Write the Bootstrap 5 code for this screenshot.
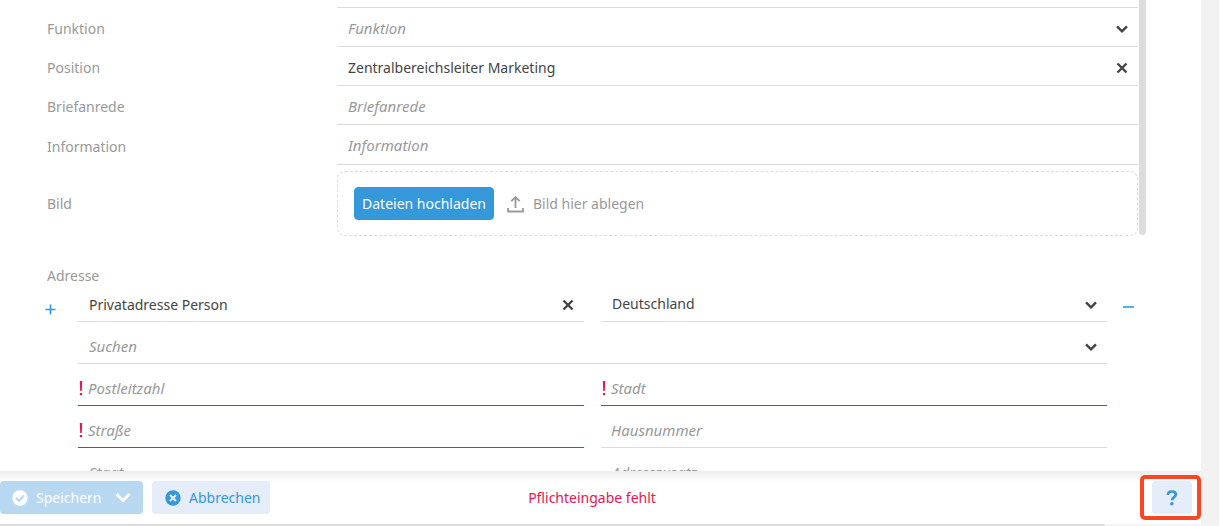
<!DOCTYPE html>
<html lang="de">
<head>
<meta charset="utf-8">
<meta name="viewport" content="width=device-width, initial-scale=1">
<title>Person bearbeiten</title>
<link href="https://cdn.jsdelivr.net/npm/bootstrap@5.3.0/dist/css/bootstrap.min.css" rel="stylesheet">
<style>
  body { font-family: "Noto Sans", sans-serif; font-size: 14px; line-height: 20px; color: #444; background: #fff; }
  .app-shell { height: 100vh; background: #f2f2f2; margin-right: 2px; padding-right: 18px; }
  .pane { background: #fff; }
  .pane-body { min-height: 0; padding-left: 47px; }

  /* person fields, with their scroll thumb at the right */
  .person-area { margin-right: 55px; }
  .person-thumb { width: 7px; height: 235px; margin-left: 1px; background: #dcdcdc; border-radius: 0 0 4px 4px; }
  .field-label { width: 290px; color: #999; flex-shrink: 0; padding-top: 3px; }
  .field-row { height: 39px; }
  .field-row.tall { height: 40px; }
  .row-end { height: 8px; }
  .line-field { border-bottom: 1px solid #dcdcdc; position: relative; min-width: 0; height: 100%; }
  .line-field input, .line-field select {
    width: 100%; height: 100%; border: 0; outline: 0; background: transparent; appearance: none;
    padding: 2px 40px 0 11px; color: #444; line-height: 20px;
  }
  .line-field input::placeholder { color: #999; font-style: italic; font-size: 15px; opacity: 1; }
  .line-field select.unset { color: #999; font-style: italic; font-size: 15px; }
  .field-icon { position: absolute; right: 9px; top: 50%; margin-top: 2px; transform: translateY(-50%); color: #444; line-height: 0; pointer-events: none; }
  button.field-icon { right: 10px; pointer-events: auto; padding: 0; border: 0; background: none; }
  .missing { border-bottom-color: #e9164f; }
  .bang { position: absolute; left: 1px; top: 50%; margin-top: 3px; transform: translateY(-50%); color: #e9164f; line-height: 0; }

  .drop-zone { margin-top: 6px; height: 65px; border: 1px dashed #dcdcdc; border-radius: 8px; padding: 0 16px; color: #999; }
  .drop-label { padding-top: 7px; }
  .btn-upload { --bs-btn-color: #fff; --bs-btn-bg: #3498db; --bs-btn-border-color: #3498db; --bs-btn-hover-bg: #2b87c4; --bs-btn-hover-color: #fff; --bs-btn-font-size: 14px; --bs-btn-border-radius: 4px; --bs-btn-padding-x: 7px; --bs-btn-padding-y: 0; height: 33px; line-height: 20px; }
  .upload-icon { margin-left: 13px; margin-right: 9px; }

  /* address block */
  .address-title { color: #999; margin-top: 30px; line-height: 20px; }
  .address-area { margin-right: 67px; margin-top: -6px; }
  .step-btn { width: 33px; margin-left: -2px; flex-shrink: 0; color: #3498db; padding: 0; border: 0; background: none; text-align: left; line-height: 0; height: 58px; }
  .step-btn.less { width: 27px; margin-left: 0; text-align: right; height: 54px; }
  .address-grid { display: grid; grid-template-columns: 1fr 1fr; column-gap: 17px; grid-auto-rows: 42px; }
  .address-grid .line-field input, .address-grid .line-field select { padding-top: 7px; }
  .address-grid .field-icon { margin-top: 4px; }
  .span-all { grid-column: 1 / -1; }
  .address-grid .line-field.required-field input { padding-left: 10px; }

  /* footer */
  .action-bar { height: 53px; background: linear-gradient(#ededed, #fff 11px); padding-right: 9px; }
  .bar-side { flex: 1 1 0; }
  .action-btn { --bs-btn-font-size: 14px; --bs-btn-border-radius: 4px; --bs-btn-border-width: 0; --bs-btn-padding-y: 0; height: 33px; line-height: 20px; }
  .action-btn svg { flex-shrink: 0; }
  .btn-save { --bs-btn-padding-x: 12px; --bs-btn-disabled-bg: #b8d8f1; --bs-btn-disabled-color: #fff; --bs-btn-disabled-opacity: 1; width: 143px; }
  .btn-soft { --bs-btn-bg: #e5edfb; --bs-btn-color: #3498db; --bs-btn-hover-bg: #d6e2f7; --bs-btn-hover-color: #2b87c4; --bs-btn-padding-x: 12px; }
  .btn-cancel { width: 118px; margin-left: 9px; --bs-btn-padding-x: 13px; white-space: nowrap; }
  .btn-help { width: 40px; --bs-btn-padding-x: 0; }
  .error-note { color: #e9164f; padding-right: 8px; }
  .help-frame { position: absolute; right: 0; top: 4px; width: 61px; height: 45px; border: 4px solid #f94624; border-radius: 5px; pointer-events: none; }
  .scroll-track { height: 2px; background: #f5f5f5; margin-right: -20px; }
  .scroll-thumb { width: calc(100% - 116px); height: 2px; background: #dcdcdc; border-radius: 0 2px 0 0; }
</style>
</head>
<body>
<svg width="0" height="0" class="position-absolute" aria-hidden="true">
  <symbol id="chevron" viewBox="0 0 14 9"><path d="M2 1.8 7 6.8 12 1.8" fill="none" stroke="currentColor" stroke-width="2.4"/></symbol>
  <symbol id="cross" viewBox="0 0 12 12"><path d="M1.5 1.5 10.5 10.5M10.5 1.5 1.5 10.5" fill="none" stroke="currentColor" stroke-width="2.4"/></symbol>
  <symbol id="bang" viewBox="0 0 4 16"><path d="M.8 1H3.200L2.800 11H1.200ZM.9 13H3.100V15.200H.9Z" fill="currentColor"/></symbol>
</svg>

<div class="app-shell overflow-hidden">
  <form class="pane d-flex flex-column h-100">
    <main class="pane-body flex-fill overflow-hidden">
      <div class="person-area d-flex align-items-start">
        <div class="flex-fill">
          <div class="d-flex row-end"><div class="field-label"></div><div class="line-field flex-fill"></div></div>
          <div class="d-flex align-items-center field-row">
            <label class="field-label" for="funktion">Funktion</label>
            <div class="line-field flex-fill">
              <select id="funktion" class="unset"><option>Funktion</option></select>
              <span class="field-icon"><svg width="14" height="9"><use href="#chevron"/></svg></span>
            </div>
          </div>
          <div class="d-flex align-items-center field-row">
            <label class="field-label" for="position">Position</label>
            <div class="line-field flex-fill">
              <input id="position" type="text" value="Zentralbereichsleiter Marketing">
              <button type="button" class="field-icon" aria-label="Position leeren"><svg width="12" height="12"><use href="#cross"/></svg></button>
            </div>
          </div>
          <div class="d-flex align-items-center field-row">
            <label class="field-label" for="anrede">Briefanrede</label>
            <div class="line-field flex-fill"><input id="anrede" type="text" placeholder="Briefanrede"></div>
          </div>
          <div class="d-flex align-items-center field-row tall">
            <label class="field-label" for="info">Information</label>
            <div class="line-field flex-fill"><input id="info" type="text" placeholder="Information"></div>
          </div>
          <div class="d-flex align-items-center">
            <div class="field-label drop-label">Bild</div>
            <div class="drop-zone flex-fill d-flex align-items-center">
              <button type="button" class="btn btn-upload">Dateien hochladen</button>
              <svg class="upload-icon" width="17" height="18" viewBox="0 0 17 18" fill="none" stroke="#999" stroke-width="1.8" aria-hidden="true"><path d="M8.500 13V2.500M4.300 6.200 8.500 2 12.700 6.200M1 13V16.500H16V13"/></svg>
              <span>Bild hier ablegen</span>
            </div>
          </div>
        </div>
        <div class="person-thumb"></div>
      </div>

      <div class="address-title">Adresse</div>
      <div class="address-area d-flex align-items-start">
        <button type="button" class="step-btn" aria-label="Adresse hinzufügen"><svg width="11" height="11" viewBox="0 0 11 11" stroke="#3498db" stroke-width="1.600"><path d="M5.500 .5V10.500M.5 5.500H10.500"/></svg></button>
        <div class="address-grid flex-fill">
          <div class="line-field">
            <input type="text" aria-label="Adressart" value="Privatadresse Person">
            <button type="button" class="field-icon" aria-label="Adressart leeren"><svg width="12" height="12"><use href="#cross"/></svg></button>
          </div>
          <div class="line-field">
            <select aria-label="Land"><option>Deutschland</option></select>
            <span class="field-icon"><svg width="14" height="9"><use href="#chevron"/></svg></span>
          </div>
          <div class="line-field span-all">
            <select class="unset" aria-label="Suchen"><option>Suchen</option></select>
            <span class="field-icon"><svg width="14" height="9"><use href="#chevron"/></svg></span>
          </div>
          <div class="line-field required-field missing"><span class="bang"><svg width="4" height="16"><use href="#bang"/></svg></span><input type="text" aria-label="Postleitzahl" placeholder="Postleitzahl"></div>
          <div class="line-field required-field missing"><span class="bang"><svg width="4" height="16"><use href="#bang"/></svg></span><input type="text" aria-label="Stadt" placeholder="Stadt"></div>
          <div class="line-field required-field missing"><span class="bang"><svg width="4" height="16"><use href="#bang"/></svg></span><input type="text" aria-label="Straße" placeholder="Straße"></div>
          <div class="line-field required-field"><input type="text" aria-label="Hausnummer" placeholder="Hausnummer"></div>
          <div class="line-field"><input type="text" aria-label="Staat" placeholder="Staat"></div>
          <div class="line-field"><input type="text" aria-label="Adresszusatz" placeholder="Adresszusatz"></div>
        </div>
        <button type="button" class="step-btn less" aria-label="Adresse entfernen"><svg width="11" height="2"><rect width="11" height="2" fill="#3498db" opacity=".8"/></svg></button>
      </div>
    </main>

    <footer class="action-bar position-relative d-flex align-items-center flex-shrink-0">
      <div class="bar-side d-flex">
        <button type="submit" class="btn action-btn btn-save d-flex align-items-center" disabled>
          <svg width="16" height="16" viewBox="0 0 16 16" aria-hidden="true"><circle cx="8" cy="8" r="7.700" fill="#fff"/><path d="M4 8 7 11 12 5.500" fill="none" stroke="#b8d8f1" stroke-width="2"/></svg>
          <span class="ms-2">Speichern</span>
          <svg class="ms-auto" width="16" height="11" viewBox="0 0 16 11" aria-hidden="true"><path d="M1.500 2 8 8.500 14.500 2" fill="none" stroke="#fff" stroke-width="3"/></svg>
        </button>
        <button type="button" class="btn action-btn btn-soft btn-cancel d-flex align-items-center">
          <svg width="16" height="16" viewBox="0 0 16 16" aria-hidden="true"><circle cx="8" cy="8" r="7.700" fill="#3498db"/><path d="M5 5 11 11M11 5 5 11" stroke="#e5edfb" stroke-width="2.200"/></svg>
          <span class="ms-2">Abbrechen</span>
        </button>
      </div>
      <div class="error-note" role="alert">Pflichteingabe fehlt</div>
      <div class="bar-side d-flex justify-content-end">
        <button type="button" class="btn action-btn btn-soft btn-help d-flex align-items-center justify-content-center" aria-label="Hilfe">
          <svg width="12" height="16" viewBox="0 0 12 16" aria-hidden="true"><path d="M1.800 4.900C1.900 2.700 3.500 1.500 5.800 1.500S9.900 2.700 9.900 4.600C9.900 7.200 6 7 6 10.300" fill="none" stroke="#3498db" stroke-width="2.700"/><circle cx="5.900" cy="13.800" r="1.800" fill="#3498db"/></svg>
        </button>
      </div>
      <div class="help-frame"></div>
    </footer>
    <div class="scroll-track flex-shrink-0"><div class="scroll-thumb"></div></div>
  </form>
</div>
<script src="https://cdn.jsdelivr.net/npm/bootstrap@5.3.0/dist/js/bootstrap.bundle.min.js"></script>
</body>
</html>
